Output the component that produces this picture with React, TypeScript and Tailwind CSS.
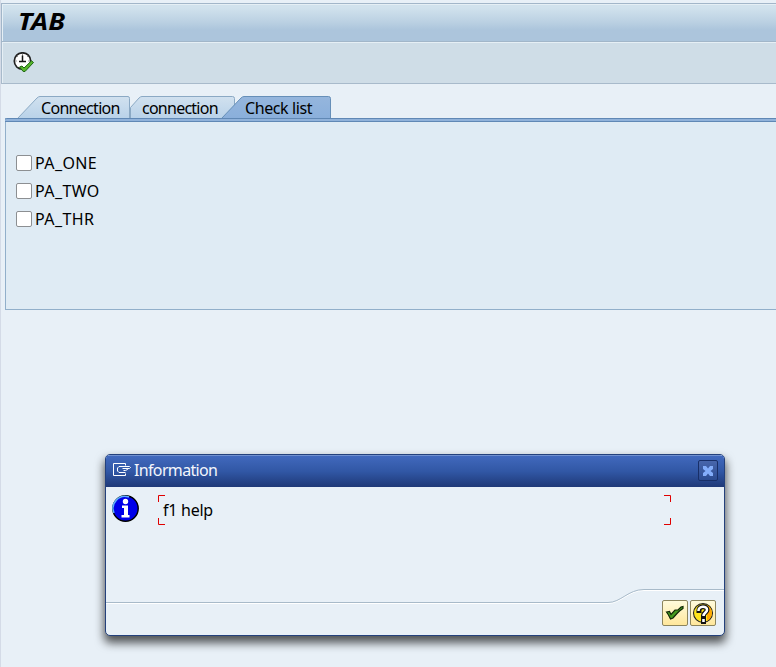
import type { ReactNode } from 'react';

type TabProps = { label: string; width: string; textClass: string; children: ReactNode };

function Tab({ label, width, textClass, children }: TabProps) {
  return (
    <div className={`relative h-[23px] shrink-0 ${width}`}>
      {children}
      <span className={`relative block whitespace-nowrap leading-[24px] ${textClass}`}>{label}</span>
    </div>
  );
}

function TabShape({ w, outline, active }: { w: number; outline: string; active?: boolean }) {
  const id = `tab-${w}`;
  return (
    <svg className="absolute inset-0" width={w} height="23" viewBox={`0 0 ${w} 23`}>
      <defs>
        <linearGradient id={id} x1="0" y1="0" x2="0" y2="1">
          <stop offset="0" stopColor={active ? '#95b6dd' : '#d1e1ef'} />
          <stop offset="1" stopColor={active ? '#8aafdb' : '#b9d2e9'} />
        </linearGradient>
      </defs>
      <path d={outline} fill={`url(#${id})`} stroke={active ? '#668fb8' : '#8ba9c4'} />
    </svg>
  );
}

function ExecuteIcon() {
  return (
    <svg width="22" height="22" viewBox="0 0 22 22">
      <circle cx="9.5" cy="9" r="8.200" fill="#fff" stroke="#222" strokeWidth="1.7" />
      <path d="M9.5 2v2M2 9h2M15 9h2M9.5 14v2M4 4l1 1M15 4l-1 1M4 15l1-1" stroke="#999" />
      <path d="M9.500 3.500v6M6 9.500h7" stroke="#111" strokeWidth="1.500" fill="none" />
      <path d="M6.500 15 9 14l2 2 7.500-7.200 2 1.700L12 19.500h-1.800z" fill="#57b52c" stroke="#1d6512" strokeWidth="1" />
    </svg>
  );
}

function CheckRow({ label }: { label: string }) {
  return (
    <label className="flex h-7 items-center">
      <span className="mr-[3px] h-4 w-4 rounded-[2px] border border-[#8c8f92] bg-white" />
      <span className="text-[16px] leading-7 tracking-[0.4px]">{label}</span>
    </label>
  );
}

function Dialog() {
  return (
    <section className="absolute left-[104px] top-[454px] flex h-[182px] w-[620px] flex-col overflow-hidden rounded-[5px] border border-[#24417c] bg-[#e8f0f7] shadow-[0_6px_10px_1px_rgba(0,0,0,0.65)]">
      <header className="flex h-8 shrink-0 items-center border-t border-[#7090cf] bg-linear-to-b from-[#4169bd] via-[#3157a5] to-[#1f3978] pb-1 pl-[7px] pr-[6px] text-white">
        <svg width="18" height="13" viewBox="0 0 18 13" fill="none" stroke="#fff">
          <path d="M12.500 2.500v-2H.5v12h12v-2M12.500 9.500H6l-1.500-1.500V5l1.500-1.500h10.500l1 1-1 1h-7M14.500 5.500v1l-2 1h-2" />
        </svg>
        <h2 className="ml-[3px] text-[16px] leading-6 tracking-[-0.65px] text-[#f3f6fc]">Information</h2>
        <button className="relative top-px ml-auto flex h-[21px] w-5 items-center justify-center rounded-[2px] border border-[#182f68] bg-linear-to-b from-[#4866ab] to-[#2b4b91]">
          <svg width="12" height="12" viewBox="0 0 12 12">
            <path d="M1 1h3l2 2.500L8 1h3v3L8.500 6 11 8v3H8L6 8.500 4 11H1V8l2.500-2L1 4z" fill="#83adfa" />
          </svg>
        </button>
      </header>
      <div className="flex h-[102px] shrink-0 pl-[6px] pt-2">
        <svg className="shrink-0" width="28" height="28" viewBox="0 0 28 28">
          <circle cx="13.500" cy="13.500" r="12.700" fill="#0000e9" stroke="#000" strokeWidth="1.400" />
          <path d="M2 18A12 12 0 0 1 17 2" fill="none" stroke="#5fafff" strokeWidth="1.500" />
          <circle cx="13.500" cy="6.500" r="2.700" fill="#fff" />
          <path d="M10 10.500h6V20h1.500v2.500h-8V20H12v-7h-2z" fill="#fff" />
        </svg>
        <div className="relative ml-[18px] h-[30px] w-[513px]">
          <svg className="absolute inset-0" width="513" height="30" fill="none" stroke="#e00000">
            <path d="M.5 7V.5H7M506 .5h6.500V7M.5 23v6.500H7M506 29.500h6.500V23" />
          </svg>
          <span className="relative ml-[5px] text-[16px] leading-[30px] tracking-[-0.25px]">f1 help</span>
        </div>
      </div>
      <footer className="relative flex h-[46px] shrink-0 items-start justify-end gap-[2px] pr-2 pt-[11px]">
        <svg className="absolute inset-0" width="618" height="46" fill="none">
          <path d="M0 14.500h502c13 0 20-13 36-13h80" stroke="#fff" />
          <path d="M0 13.500h502c13 0 20-13 36-13h80" stroke="#a8bac9" />
        </svg>
        <button className="relative flex h-[26px] w-[26px] items-center justify-center rounded-[2px] border border-[#8c855e] bg-linear-to-b from-[#fffbdc] to-[#ffe79b]">
          <svg width="20" height="18" viewBox="0 0 20 18">
            <path d="M1.500 8 4.500 7.500l1.500 3 4-4.500h3L16 3l2-.5v2L14.500 7 12 9.500 8 14l-2.500 1-2-4z" fill="#459a20" stroke="#102808" strokeWidth="1.200" />
          </svg>
        </button>
        <button className="relative flex h-[26px] w-[26px] items-center justify-center rounded-[2px] border border-[#8c855e] bg-linear-to-b from-[#fffbdc] to-[#ffe79b]">
          <svg className="shrink-0" width="22" height="22" viewBox="0 0 22 22">
            <circle cx="11" cy="11" r="9.500" fill="#ffe51b" stroke="#222" strokeWidth="1.100" />
            <path d="M15 3a9 9 0 0 1 0 16z" fill="#ffa800" />
            <path d="M7 8.500C7 3.500 15 3.500 15 8c0 2.500-3.500 2.500-3.500 5.500M11.500 16v4.500" fill="none" stroke="#111" strokeWidth="5" strokeLinecap="square" />
            <path d="M6.500 9C6 3.500 15.500 3.500 15 8c0 2.500-3.500 2.500-3.500 6M11.500 17v3" fill="none" stroke="#fff" strokeWidth="2.600" />
          </svg>
        </button>
      </footer>
    </section>
  );
}

export default function App() {
  return (
    <main className="relative h-[667px] w-[776px] overflow-hidden border-l border-[#d4dbe7] bg-[#e8f0f7] pt-[3px] font-['Noto_Sans','Open_Sans',sans-serif] text-black">
      <header className="flex h-[39px] items-center border-y border-l border-[#a2b6c9] bg-linear-to-b from-[#d1e2ed] from-10% via-[#bad0e2] via-50% to-[#acc5dc] to-70% pb-[3px] pl-4 shadow-[inset_1px_1px_#e5eff5]">
        <h1 className="origin-left scale-x-[1.18] text-[23px] font-bold italic leading-none">TAB</h1>
      </header>
      <div className="flex h-[42px] border-b border-l border-[#a8bacb] bg-[#cfdde7] pl-[11px] pt-[10px] shadow-[inset_1px_1px_#e6eff5]">
        <ExecuteIcon />
      </div>
      <nav className="mt-3 flex h-[22px] pl-4 text-[16px]">
        <Tab label="Connection" width="w-[113px]" textClass="pl-6 tracking-[-0.7px]">
          <TabShape w={113} outline="M.5 22.500 20 2q1.500-1.500 3-1.500h88q1.500 0 1.500 2v20" />
        </Tab>
        <Tab label="connection" width="w-[105px]" textClass="pl-3 tracking-[-0.75px]">
          <TabShape w={105} outline="M.5 22.500v-11L9 2q1.500-1.500 3-1.500h90.500q2 0 2 2v20" />
        </Tab>
        <div className="-ml-[14px]">
          <Tab label="Check list" width="w-[110px]" textClass="pl-6 tracking-[-0.4px]">
            <TabShape w={110} active outline="M.5 22.500 20 2q1.500-1.500 3-1.500h84.500q2 0 2 2v20" />
          </Tab>
        </div>
      </nav>
      <section className="relative ml-1 h-[192px] border-b border-l border-[#91afca] bg-[#dfebf4]">
        <div className="-ml-px h-1 rounded-tl-[2px] border-y border-[#6088b5] bg-[#90b2da]" />
        <div className="pl-[10px] pt-[27px]">
          <CheckRow label="PA_ONE" />
          <CheckRow label="PA_TWO" />
          <CheckRow label="PA_THR" />
        </div>
      </section>
      <Dialog />
    </main>
  );
}
